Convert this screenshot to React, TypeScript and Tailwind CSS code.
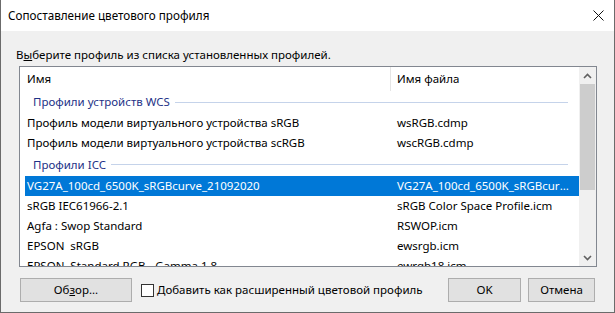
import { useState } from "react";

type Row = {
  kind: "group" | "item";
  name: string;
  file?: string;
};

// строки списка профилей
const rows: Row[] = [
  { kind: "group", name: "Профили устройств WCS" },
  { kind: "item", name: "Профиль модели виртуального устройства sRGB", file: "wsRGB.cdmp" },
  { kind: "item", name: "Профиль модели виртуального устройства scRGB", file: "wscRGB.cdmp" },
  { kind: "group", name: "Профили ICC" },
  { kind: "item", name: "VG27A_100cd_6500K_sRGBcurve_21092020", file: "VG27A_100cd_6500K_sRGBcurve_21092020.icm" },
  { kind: "item", name: "sRGB IEC61966-2.1", file: "sRGB Color Space Profile.icm" },
  { kind: "item", name: "Agfa : Swop Standard", file: "RSWOP.icm" },
  { kind: "item", name: "EPSON  sRGB", file: "ewsrgb.icm" },
  { kind: "item", name: "EPSON  Standard RGB - Gamma 1.8", file: "ewrgb18.icm" },
];

const GroupRow = ({ name, first }: { name: string; first: boolean }): JSX.Element => (
  <div className={`flex items-center shrink-0 pl-[13px] pr-[11px] ${first ? "h-[22px]" : "h-[23px]"}`}>
    <span className="text-[#1e3287] whitespace-nowrap">{name}</span>
    <div className="flex-1 h-px bg-[#c5d3ea] ml-[5px]" />
  </div>
);

const ItemRow = ({ row, selected }: { row: Row; selected: boolean }): JSX.Element => (
  <div
    className={`flex items-center shrink-0 h-[20px] ml-[5px] whitespace-pre ${selected ? "bg-[#0078d7] text-white" : "text-black"}`}
  >
    <div className="w-[366px] pl-[2px] overflow-hidden">{row.name}</div>
    <div className="flex-1 pl-[6px] pr-[6px] overflow-hidden text-ellipsis">{row.file}</div>
  </div>
);

const ScrollBar = (): JSX.Element => (
  <div className="w-[17px] h-full bg-[#f0f0f0] flex flex-col">
    <div className="h-[17px] flex items-center justify-center">
      <svg width="9" height="6" viewBox="0 0 9 6">
        <path d="M1 5 L4.5 1.5 L8 5" stroke="#606060" strokeWidth="1.6" fill="none" />
      </svg>
    </div>
    <div className="mx-px h-[106px] bg-[#cdcdcd]" />
    <div className="flex-1" />
    <div className="h-[17px] flex items-center justify-center">
      <svg width="9" height="6" viewBox="0 0 9 6">
        <path d="M1 1 L4.5 4.5 L8 1" stroke="#606060" strokeWidth="1.6" fill="none" />
      </svg>
    </div>
  </div>
);

const Button = ({ children, width }: { children: React.ReactNode; width: string }): JSX.Element => (
  <button className={`${width} h-[24px] bg-[#e1e1e1] border border-[#adadad] text-black leading-none`}>
    {children}
  </button>
);

const App = (): JSX.Element => {
  const [checked, setChecked] = useState<boolean>(false);

  return (
    <div
      className="w-[615px] h-[313px] bg-[#f0f0f0] border-x border-b border-[#6b6b6b] flex flex-col text-[11.5px] text-black"
      style={{ fontFamily: '"Noto Sans", "Open Sans", sans-serif' }}
    >
      {/* заголовок окна */}
      <div className="h-[31px] bg-white flex items-center pl-[7px] pr-[10px] shrink-0">
        <span className="flex-1 text-[11.7px]">Сопоставление цветового профиля</span>
        <svg width="11" height="11" viewBox="0 0 11 11">
          <path d="M0.5 0.5 L10.5 10.5 M10.5 0.5 L0.5 10.5" stroke="#111" strokeWidth="1" />
        </svg>
      </div>

      <div className="pl-[15px] mt-[16px] h-[16px] leading-[16px]">
        В<span className="underline">ы</span>берите профиль из списка установленных профилей.
      </div>

      {/* список профилей */}
      <div className="ml-[18px] mt-[3px] w-[578px] h-[201px] border border-[#828790] bg-white flex overflow-hidden">
        <div className="flex-1 flex flex-col overflow-hidden">
          <div className="h-[24px] flex shrink-0">
            <div className="w-[371px] pl-[7px] flex items-center border-r border-[#e5e5e5]">Имя</div>
            <div className="flex-1 pl-[6px] flex items-center">Имя файла</div>
          </div>
          {rows.map((row, i) =>
            row.kind === "group" ? (
              <GroupRow key={i} name={row.name} first={i === 0} />
            ) : (
              <ItemRow key={i} row={row} selected={i === 4} />
            )
          )}
        </div>
        <ScrollBar />
      </div>

      {/* нижняя панель кнопок */}
      <div className="flex items-center mt-[11px] pl-[19px]">
        <Button width="w-[112px]">
          Об<span className="underline">з</span>ор...
        </Button>
        <label className="flex items-center ml-[9px] cursor-default">
          <span
            className="w-[13px] h-[13px] border border-[#333] bg-white inline-block"
            onClick={() => setChecked(c => !c)}
          />
          <span className="ml-[3px]">Добавить как расширенный цветовой профиль</span>
        </label>
        <div className="flex-1" />
        <Button width="w-[73px]">OK</Button>
        <div className="w-[7px]" />
        <Button width="w-[67px]">Отмена</Button>
        <div className="w-[19px]" />
        {checked && null}
      </div>
    </div>
  );
};

export default App;
